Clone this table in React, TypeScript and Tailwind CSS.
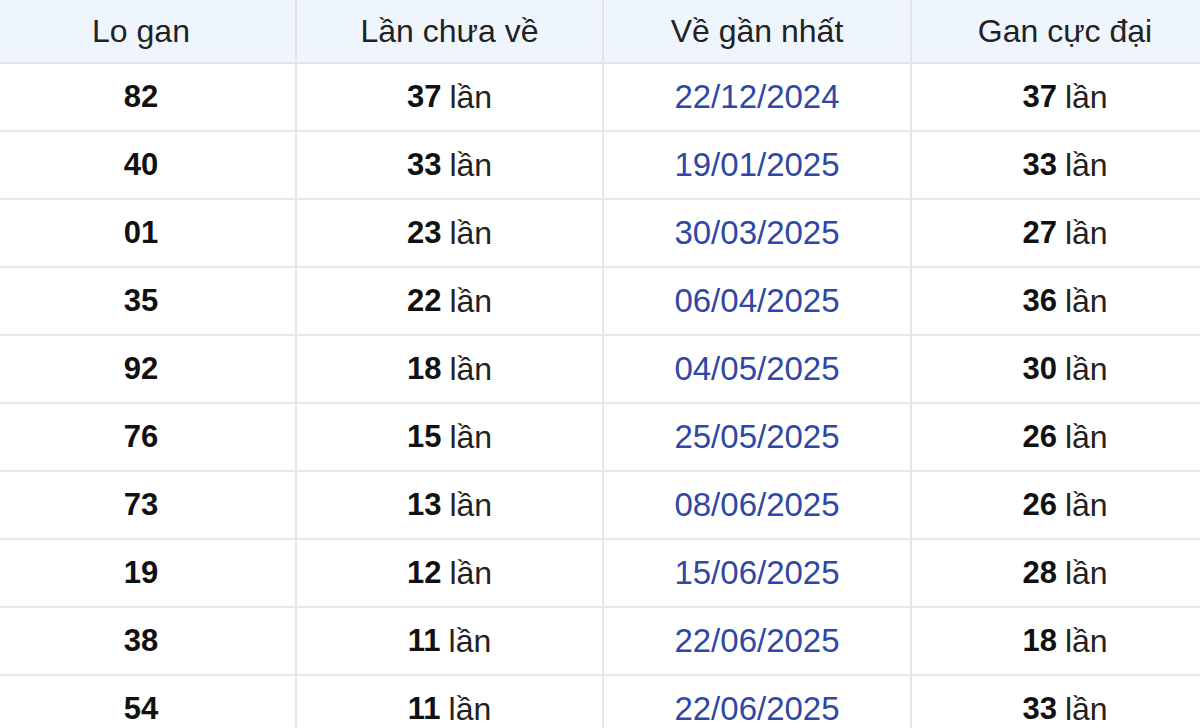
import React from "react";

const rows: [string, string, string, string][] = [
  ["82", "37", "22/12/2024", "37"],
  ["40", "33", "19/01/2025", "33"],
  ["01", "23", "30/03/2025", "27"],
  ["35", "22", "06/04/2025", "36"],
  ["92", "18", "04/05/2025", "30"],
  ["76", "15", "25/05/2025", "26"],
  ["73", "13", "08/06/2025", "26"],
  ["19", "12", "15/06/2025", "28"],
  ["38", "11", "22/06/2025", "18"],
  ["54", "11", "22/06/2025", "33"],
];

export default function App() {
  return (
    <div
      className="w-[1200px] h-[728px] overflow-hidden bg-white"
      style={{ fontFamily: '"Liberation Sans", Arial, sans-serif' }}
    >
      <div className="ml-[-13px] w-[1231px]">
        <div className="flex h-[64px] bg-[#eef5fc] border-b-2 border-[#e2e4e7] text-[32px] text-[#222]">
          <div className="w-[308px] flex items-center justify-center">Lo gan</div>
          <div className="w-[307px] flex items-center justify-center border-l-2 border-[#e2e4e7]">Lần chưa về</div>
          <div className="w-[308px] flex items-center justify-center border-l-2 border-[#e2e4e7]">Về gần nhất</div>
          <div className="w-[308px] flex items-center justify-center border-l-2 border-[#e2e4e7]">Gan cực đại</div>
        </div>
        {rows.map((r, i) => (
          <div key={i} className="flex h-[68px] border-b-2 border-[#e6e7e9] text-[32px] text-[#222]">
            <div className="w-[308px] flex items-center justify-center font-bold text-[31px] text-[#111]">{r[0]}</div>
            <div className="w-[307px] flex items-center justify-center border-l-2 border-[#e6e7e9]">
              <span className="font-bold text-[31px] text-[#111]">{r[1]}</span>
              <span className="ml-[8px]">lần</span>
            </div>
            <div className="w-[308px] flex items-center justify-center border-l-2 border-[#e6e7e9] text-[33px] text-[#2f47a6]">{r[2]}</div>
            <div className="w-[308px] flex items-center justify-center border-l-2 border-[#e6e7e9]">
              <span className="font-bold text-[31px] text-[#111]">{r[3]}</span>
              <span className="ml-[8px]">lần</span>
            </div>
          </div>
        ))}
      </div>
    </div>
  );
}
